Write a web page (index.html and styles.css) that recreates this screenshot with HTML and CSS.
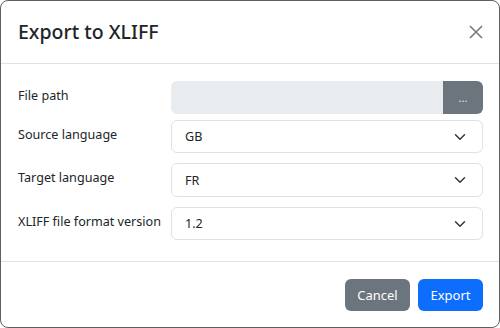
FILE: index.html
```html
<!DOCTYPE html>
<html lang="en">
<head>
    <meta charset="UTF-8">
    <meta name="viewport" content="width=device-width, initial-scale=1.0">
    <title>Export to XLIFF</title>
    <link rel="stylesheet" href="styles.css">
</head>
<body>
    <div class="modal">
        <div class="modal-header">
            <h5 class="modal-title">Export to XLIFF</h5>
            <button class="btn-close" type="button" aria-label="Close">
                <svg viewBox="0 0 14 14" width="14" height="14">
                    <path d="M1 1 L13 13 M13 1 L1 13" stroke="currentColor" stroke-width="1.6" fill="none"/>
                </svg>
            </button>
        </div>

        <div class="modal-body">
            <!-- file path -->
            <div class="form-row row-file">
                <label class="form-label">File path</label>
                <div class="input-group">
                    <input type="text" class="form-control" disabled>
                    <button type="button" class="btn btn-secondary btn-browse">...</button>
                </div>
            </div>

            <div class="form-row">
                <label class="form-label">Source language</label>
                <div class="form-select">
                    <span>GB</span>
                    <svg class="chevron" viewBox="0 0 16 16" width="12" height="12"><path d="M2 5l6 6 6-6" stroke="#343a40" stroke-width="2" fill="none" stroke-linecap="round" stroke-linejoin="round"/></svg>
                </div>
            </div>

            <div class="form-row">
                <label class="form-label">Target language</label>
                <div class="form-select tall">
                    <span>FR</span>
                    <svg class="chevron" viewBox="0 0 16 16" width="12" height="12"><path d="M2 5l6 6 6-6" stroke="#343a40" stroke-width="2" fill="none" stroke-linecap="round" stroke-linejoin="round"/></svg>
                </div>
            </div>

            <div class="form-row">
                <label class="form-label">XLIFF file format version</label>
                <div class="form-select">
                    <span>1.2</span>
                    <svg class="chevron" viewBox="0 0 16 16" width="12" height="12"><path d="M2 5l6 6 6-6" stroke="#343a40" stroke-width="2" fill="none" stroke-linecap="round" stroke-linejoin="round"/></svg>
                </div>
            </div>
        </div>

        <div class="modal-footer">
            <button type="button" class="btn btn-secondary">Cancel</button>
            <button type="button" class="btn btn-primary">Export</button>
        </div>
    </div>
</body>
</html>
```

FILE: styles.css
```css
* {
    margin: 0;
    padding: 0;
    box-sizing: border-box;
}

body {
    font-family: 'Noto Sans', 'Open Sans', sans-serif;
    font-size: 12.6px;
    color: #212529;
    background: white;
}

.modal {
    width: 500px;
    height: 328px;
    border: 1px solid #5f5f5f;
    border-radius: 8px;
    background: white;
    display: flex;
    flex-direction: column;
    overflow: hidden;
}

.modal-header {
    height: 63px;
    display: flex;
    align-items: center;
    justify-content: space-between;
    padding: 0 16px 0 17px;
    border-bottom: 1px solid #dee2e6;
}

.modal-title {
    font-size: 19.5px;
    font-weight: 500;
    line-height: 1.5;
}

.btn-close {
    background: none;
    border: none;
    color: #7a7a7a;
    width: 14px;
    height: 14px;
    display: flex;
    cursor: pointer;
}

.modal-body {
    flex: 1;
    padding: 17px 16px 0 17px;
}

.form-row {
    display: grid;
    grid-template-columns: 153px 1fr;
    align-items: center;
    margin-bottom: 10px;
}

.row-file {
    margin-bottom: 6px;
}

.form-label {
    line-height: 1.5;
    padding-bottom: 3px;
}

.input-group {
    display: flex;
    height: 33px;
}

.form-control {
    flex: 1;
    border: none;
    background: #e9ecef;
    border-radius: 6px 0 0 6px;
}

.form-select {
    height: 33px;
    border: 1px solid #dee2e6;
    border-radius: 6px;
    display: flex;
    align-items: center;
    justify-content: space-between;
    padding: 0 16px 0 13px;
}

.form-select.tall {
    height: 34px;
}

.chevron {
    display: block;
}

.btn {
    font-family: inherit;
    font-size: 13px;
    color: white;
    border: none;
    border-radius: 6px;
    cursor: pointer;
}

.btn-secondary {
    background: #6c757d;
}

.btn-primary {
    background: #0d6efd;
}

.btn-browse {
    width: 40px;
    border-radius: 0 6px 6px 0;
    font-size: 11px;
    color: #e0e3e6;
}

.modal-footer {
    height: 66px;
    border-top: 1px solid #dee2e6;
    display: flex;
    align-items: center;
    justify-content: flex-end;
    gap: 8px;
    padding: 0 16px;
}

.modal-footer .btn {
    width: 65px;
    height: 32px;
}
```
